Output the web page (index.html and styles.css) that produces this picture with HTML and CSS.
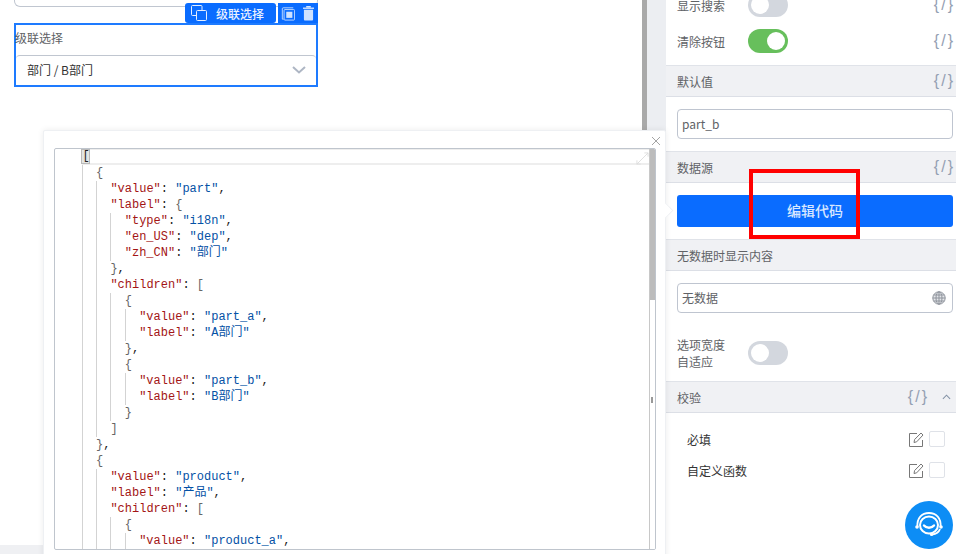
FILE: index.html
```html
<!DOCTYPE html>
<html lang="zh">
<head>
<meta charset="utf-8">
<title>级联选择</title>
<link rel="stylesheet" href="styles.css">
</head>
<body>
<div class="app">
  <main class="canvas">
    <div class="prev-field"></div>
    <div class="selected">
      <div class="toolbar">
        <div class="tool-name">
          <svg class="tool-ico" viewBox="0 0 16 16" fill="none" stroke="#e4eeff" stroke-width="1"><path d="M5 10.500H1.500a1 1 0 0 1-1-1v-8a1 1 0 0 1 1-1H10a1 1 0 0 1 1 1V5"/><rect x="5.500" y="5.500" width="10" height="10" rx="1"/></svg>
          <span>级联选择</span>
        </div>
        <div class="tool-actions">
          <svg class="act-ico" viewBox="0 0 16 16" fill="none" stroke="#cfe2ff" stroke-width="1"><path d="M3 14.500H1.500v-12a1 1 0 0 1 1-1H14"/><rect x="3.500" y="3.500" width="12" height="12" rx="1"/><rect x="6" y="6" width="7" height="7" fill="#cfe2ff" stroke="none"/></svg>
          <svg class="act-trash" viewBox="0 0 12 16"><rect x="0" y="1.600" width="12" height="1.200" fill="#fff"/><rect x="3.500" y="0" width="5" height="1.400" fill="#fff"/><path d="M1 4h10v10.500a1 1 0 0 1-1 1H2a1 1 0 0 1-1-1z" fill="#cfe2ff"/></svg>
        </div>
      </div>
      <div class="field-label">级联选择</div>
      <div class="cascader">
        <span>部门 / B部门</span>
        <svg class="chev" viewBox="0 0 14 8" fill="none" stroke="#aeb6c4" stroke-width="2"><path d="M1 1l6 5.500L13 1"/></svg>
      </div>
    </div>
    <div class="hbar"></div>
  </main>
  <div class="vbar"></div>
  <div class="gutter"></div>
  <aside class="panel">
    <div class="row row-first">
      <span class="row-label">显示搜索</span>
      <span class="toggle"></span>
      <span class="brace">{/}</span>
    </div>
    <div class="row">
      <span class="row-label">清除按钮</span>
      <span class="toggle on"></span>
      <span class="brace">{/}</span>
    </div>
    <div class="head"><span>默认值</span><span class="brace">{/}</span></div>
    <div class="body"><div class="input">part_b</div></div>
    <div class="head"><span>数据源</span><span class="brace">{/}</span></div>
    <div class="body"><div class="primary">编辑代码</div></div>
    <div class="head"><span>无数据时显示内容</span></div>
    <div class="body">
      <div class="input">无数据
        <svg class="globe" viewBox="0 0 14 14" fill="none" stroke="#8f949c" stroke-width="1"><circle cx="7" cy="7" r="6.200" fill="#e4e6ea"/><ellipse cx="7" cy="7" rx="3" ry="6.200"/><path d="M7 .8v12.400M.8 7h12.400M1.600 4h10.800M1.600 10h10.800"/></svg>
      </div>
    </div>
    <div class="row row-wrap">
      <span class="row-label two">选项宽度<br>自适应</span>
      <span class="toggle"></span>
    </div>
    <div class="head head-v">
      <span>校验</span>
      <span class="head-right">
        <span class="brace big">{/}</span>
        <svg class="up" viewBox="0 0 10 6" fill="none" stroke="#8492a6" stroke-width="1.200"><path d="M1 5l4-4 4 4"/></svg>
      </span>
    </div>
    <div class="rules">
      <div class="rule">
        <span>必填</span>
        <svg class="edit" viewBox="0 0 15 15" fill="none" stroke="#777" stroke-width="1"><path d="M8 1.500H.5v13h13V8"/><path d="M5 10.500l.6-3L12 1l2 2-6.300 6.800z"/></svg>
        <span class="check"></span>
      </div>
      <div class="rule">
        <span>自定义函数</span>
        <svg class="edit" viewBox="0 0 15 15" fill="none" stroke="#777" stroke-width="1"><path d="M8 1.500H.5v13h13V8"/><path d="M5 10.500l.6-3L12 1l2 2-6.300 6.800z"/></svg>
        <span class="check"></span>
      </div>
    </div>
  </aside>

  <div class="popover">
    <svg class="close" viewBox="0 0 10 10" fill="none" stroke="#9a9a9a" stroke-width="0.9"><path d="M1 1l8 8M9 1l-8 8"/></svg>
    <div class="arrow"></div>
    <div class="editor">
      <div class="code">
        <div class="ln active"><span class="bm">[</span></div>
        <div class="ln"><i></i><em>{</em></div>
        <div class="ln"><i></i><i></i><span class="k">"value"</span><b>: </b><span class="s">"part"</span><b>,</b></div>
        <div class="ln"><i></i><i></i><span class="k">"label"</span><b>: </b><em>{</em></div>
        <div class="ln"><i></i><i></i><i></i><span class="k">"type"</span><b>: </b><span class="s">"i18n"</span><b>,</b></div>
        <div class="ln"><i></i><i></i><i></i><span class="k">"en_US"</span><b>: </b><span class="s">"dep"</span><b>,</b></div>
        <div class="ln"><i></i><i></i><i></i><span class="k">"zh_CN"</span><b>: </b><span class="s">"部门"</span></div>
        <div class="ln"><i></i><i></i><em>}</em><b>,</b></div>
        <div class="ln"><i></i><i></i><span class="k">"children"</span><b>: </b><em>[</em></div>
        <div class="ln"><i></i><i></i><i></i><em>{</em></div>
        <div class="ln"><i></i><i></i><i></i><i></i><span class="k">"value"</span><b>: </b><span class="s">"part_a"</span><b>,</b></div>
        <div class="ln"><i></i><i></i><i></i><i></i><span class="k">"label"</span><b>: </b><span class="s">"A部门"</span></div>
        <div class="ln"><i></i><i></i><i></i><em>}</em><b>,</b></div>
        <div class="ln"><i></i><i></i><i></i><em>{</em></div>
        <div class="ln"><i></i><i></i><i></i><i></i><span class="k">"value"</span><b>: </b><span class="s">"part_b"</span><b>,</b></div>
        <div class="ln"><i></i><i></i><i></i><i></i><span class="k">"label"</span><b>: </b><span class="s">"B部门"</span></div>
        <div class="ln"><i></i><i></i><i></i><em>}</em></div>
        <div class="ln"><i></i><i></i><em>]</em></div>
        <div class="ln"><i></i><em>}</em><b>,</b></div>
        <div class="ln"><i></i><em>{</em></div>
        <div class="ln"><i></i><i></i><span class="k">"value"</span><b>: </b><span class="s">"product"</span><b>,</b></div>
        <div class="ln"><i></i><i></i><span class="k">"label"</span><b>: </b><span class="s">"产品"</span><b>,</b></div>
        <div class="ln"><i></i><i></i><span class="k">"children"</span><b>: </b><em>[</em></div>
        <div class="ln"><i></i><i></i><i></i><em>{</em></div>
        <div class="ln"><i></i><i></i><i></i><i></i><span class="k">"value"</span><b>: </b><span class="s">"product_a"</span><b>,</b></div>
      </div>
      <svg class="expand" viewBox="0 0 14 14" fill="none" stroke="#ddd" stroke-width="1"><path d="M1 13L13 1M9 1h4v4M1 9v4h4"/></svg>
      <div class="ruler"><div class="thumb"></div><div class="mark"></div></div>
    </div>
  </div>

  <div class="redbox"></div>
  <div class="support">
    <svg viewBox="0 0 32 32" fill="none" stroke="#fff" stroke-width="1.800"><path d="M4.500 18C3.500 9 9 4 16 4s12.500 5 11.500 14"/><ellipse cx="16" cy="16" rx="9" ry="8.500" stroke-width="2"/><path d="M11 16.500c2.500 3 7.500 3 10 0" stroke-width="2.400" stroke-linecap="round"/><circle cx="4" cy="18" r="1.800" fill="#fff" stroke="none"/><circle cx="28" cy="18" r="1.800" fill="#fff" stroke="none"/><path d="M27 20c-1 3-4 5-8 5.500"/><circle cx="18.500" cy="25.500" r="1.600" fill="#fff" stroke="none"/></svg>
  </div>
</div>
</body>
</html>
```
FILE: styles.css
```css
* { box-sizing: border-box; }
html, body { margin: 0; height: 100%; overflow: hidden; background: #fff; }
body { font-family: "Noto Sans CJK SC", "Noto Sans", sans-serif; font-size: 12px; color: #606266; }
.app { position: relative; display: flex; width: 956px; height: 554px; overflow: hidden; }

.canvas { display: flex; flex-direction: column; width: 642px; padding-left: 14px; flex: none; }
.prev-field { width: 304px; height: 8px; margin-top: -1px; border: 1px solid #c0c6d0; border-top: 0; border-radius: 0 0 6px 6px; margin-bottom: 16px; }
.selected { position: relative; width: 304px; height: 64px; border: 2px solid #1e7bff; }
.hbar { height: 9px; margin: auto 0 0 -14px; background: #eff0f3; }
.toolbar { position: absolute; right: -2px; top: -22px; display: flex; gap: 2px; height: 20px; }
.tool-name { display: flex; align-items: center; gap: 9px; width: 91px; padding-left: 6px; background: #0a6cff; color: #e9f1ff; border-radius: 3px; font-weight: 500; font-size: 12px; }
.tool-ico { width: 16px; height: 16px; }
.tool-actions { display: flex; align-items: center; gap: 8px; width: 40px; padding-left: 3px; background: #0a6cff; }
.act-ico { width: 14px; height: 15px; }
.act-trash { width: 11px; height: 15px; }
.field-label { height: 30px; line-height: 26px; margin-left: -1px; }
.cascader { display: flex; align-items: center; justify-content: space-between; height: 30px; padding: 0 10px 2px 11px; border-top: 1px solid #c0c6d0; border-radius: 4px 4px 0 0; color: #333; }
.chev { width: 14px; height: 8px; }

.vbar { width: 5px; flex: none; background: #a9a9a9; }
.gutter { width: 19px; flex: none; background: #eceef2; }
.panel { width: 290px; flex: none; background: #fff; }

.row { display: flex; align-items: center; height: 24px; margin: 12px 3px 0 11px; position: relative; }
.row-first { margin-top: -7px; }
.row-label { width: 71px; flex: none; }
.row-label.two { line-height: 17px; }
.row-wrap { margin-top: 28px; margin-bottom: 16px; }
.toggle { position: relative; width: 40px; height: 24px; border-radius: 12px; background: #d3d7de; flex: none; }
.toggle::after { content: ""; position: absolute; left: 3px; top: 3px; width: 18px; height: 18px; border-radius: 50%; background: #fff; }
.toggle.on { background: #67bf5c; }
.toggle.on::after { left: 19px; }
.brace { margin-left: auto; margin-right: -2px; font-family: "Liberation Sans", sans-serif; font-size: 16px; color: #94a0b3; letter-spacing: 2px; }
.brace.big { margin-right: 0; }

.head { display: flex; align-items: center; justify-content: space-between; height: 32px; margin-top: 12px; padding: 0 3px 0 11px; background: #f0f1f4; border-top: 1px solid #e0e3e9; border-bottom: 1px solid #dcdfe6; }
.head-v { margin-top: 0; }
.head-right { display: flex; align-items: center; gap: 13px; margin-left: auto; margin-right: 2px; }
.up { width: 9px; height: 6px; }

.body { padding: 12px 3px 0 11px; }
.input { display: flex; align-items: center; justify-content: space-between; height: 30px; padding: 0 6px 2px 4px; border: 1px solid #bfc5d0; border-radius: 4px; background: #fff; }
.globe { width: 14px; height: 14px; margin-top: 2px; }
.primary { display: flex; align-items: center; justify-content: center; height: 32px; padding-bottom: 2px; background: #0a6cff; border-radius: 3px; color: #d8e7ff; font-size: 14px; font-weight: 500; }

.rules { padding: 16px 11px 0 21px; display: flex; flex-direction: column; gap: 11px; }
.rule { display: flex; align-items: center; height: 20px; color: #333; }
.rule > span:first-child { margin-right: auto; }
.edit { width: 15px; height: 15px; margin-right: 5px; }
.check { width: 16px; height: 16px; border: 1px solid #dfe2e8; border-radius: 2px; background: #fff; }

.popover { position: absolute; left: 43px; top: 130px; width: 623px; height: 430px; background: #fff; border: 1px solid #eef0f3; border-radius: 2px; box-shadow: 0 0 6px rgba(0, 0, 0, .08); padding: 17px 9px 0 10px; }
.close { position: absolute; right: 4px; top: 5px; width: 10px; height: 10px; }
.arrow { position: absolute; right: -7px; top: 73px; width: 13px; height: 13px; background: #fff; border: 1px solid #eef0f3; border-left: 0; border-bottom: 0; transform: rotate(45deg) scale(.85); }
.editor { position: relative; height: 402px; border: 1px solid #bfc5cd; border-radius: 2px; overflow: hidden; padding-left: 26.600px; }
.code { font-family: "Liberation Mono", "Noto Sans CJK SC", monospace; font-size: 12px; line-height: 16px; }
.ln { display: flex; height: 16px; white-space: pre; }
.ln i { width: 14.400px; flex: none; border-left: 1px solid #d3d3d3; }
.ln b { font-weight: 400; color: #222; }
.ln em { font-style: normal; color: #666; }
.k { color: #a31515; }
.s { color: #0451a5; }
.active { border-top: 1px solid #eee; border-bottom: 2px solid #eee; line-height: 14px; }
.bm { display: inline-block; height: 13px; line-height: 13px; background: #e3e5e3; outline: 1px solid #b9b9b9; color: #222; padding-left: 1px; width: 7px; }
.expand { position: absolute; right: 6px; top: 3px; width: 13px; height: 13px; }
.ruler { position: absolute; right: 0; top: 0; bottom: 0; width: 6px; border-left: 1px solid #c8c8c8; background: #fff; }
.thumb { height: 151px; background: #bcbcbc; }
.mark { position: absolute; left: 1px; top: 248px; width: 2px; height: 6px; background: #999; }

.redbox { position: absolute; left: 749px; top: 169px; width: 111px; height: 70px; border: 4px solid #f00; }
.support { position: absolute; left: 905px; top: 501px; width: 48px; height: 48px; border-radius: 50%; background: #0d8df5; display: flex; align-items: center; justify-content: center; }
.support svg { width: 32px; height: 32px; }
```
